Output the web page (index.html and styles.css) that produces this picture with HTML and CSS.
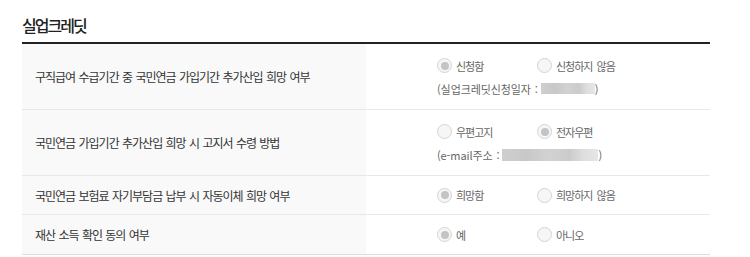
FILE: index.html
```html
<!DOCTYPE html>
<html lang="ko">
<head>
    <meta charset="UTF-8">
    <title>실업크레딧</title>
    <link rel="stylesheet" href="styles.css">
</head>
<body>
    <h2 class="section-title">실업크레딧</h2>

    <div class="info-table">
        <div class="row row-tall">
            <div class="label">구직급여 수급기간 중 국민연금 가입기간 추가산입 희망 여부</div>
            <div class="value">
                <div class="options">
                    <span class="option"><span class="radio checked"></span>신청함</span>
                    <span class="option"><span class="radio"></span>신청하지 않음</span>
                </div>
                <div class="note">(실업크레딧신청일자 : <span class="masked masked-date"></span>)</div>
            </div>
        </div>

        <div class="row row-tall">
            <div class="label">국민연금 가입기간 추가산입 희망 시 고지서 수령 방법</div>
            <div class="value">
                <div class="options">
                    <span class="option"><span class="radio"></span>우편고지</span>
                    <span class="option"><span class="radio checked"></span>전자우편</span>
                </div>
                <div class="note">(e-mail주소 : <span class="masked masked-mail"></span>)</div>
            </div>
        </div>

        <div class="row">
            <div class="label">국민연금 보험료 자기부담금 납부 시 자동이체 희망 여부</div>
            <div class="value">
                <div class="options">
                    <span class="option"><span class="radio checked"></span>희망함</span>
                    <span class="option"><span class="radio"></span>희망하지 않음</span>
                </div>
            </div>
        </div>

        <div class="row row-last">
            <div class="label">재산 소득 확인 동의 여부</div>
            <div class="value">
                <div class="options">
                    <span class="option"><span class="radio checked"></span>예</span>
                    <span class="option"><span class="radio"></span>아니오</span>
                </div>
            </div>
        </div>
    </div>
</body>
</html>
```

FILE: styles.css
```css
body {
    margin: 0;
    padding: 0 40px 0 22px;
    font-family: "Noto Sans CJK KR", "Noto Sans", sans-serif;
    color: #333;
    background: #fff;
}
.section-title {
    margin: 0;
    padding-top: 14px;
    height: 28px;
    font-size: 16px;
    font-weight: 500;
    letter-spacing: -2px;
    line-height: 22px;
    color: #222;
}
.info-table {
    width: 688px;
    border-top: 2px solid #222;
}
.row {
    display: grid;
    grid-template-columns: 344px 344px;
    height: 38px;
    border-bottom: 1px solid #e8e8e8;
}
.row-tall {
    height: 65px;
}
.row-last {
    height: 39px;
    border-bottom-color: #dcdcdc;
}
.label {
    display: flex;
    align-items: center;
    padding-left: 13px;
    background: #f9f9f9;
    font-size: 12px;
    letter-spacing: -1px;
    word-spacing: 1px;
    color: #333;
}
.value {
    display: flex;
    flex-direction: column;
    justify-content: center;
    padding-left: 71px;
    font-size: 11px;
    letter-spacing: -1px;
    word-spacing: 2px;
    color: #666;
}
.options {
    display: flex;
    height: 18px;
    align-items: center;
}
.option {
    display: flex;
    align-items: center;
    width: 100px;
}
.radio {
    box-sizing: border-box;
    width: 15px;
    height: 15px;
    margin-right: 4px;
    border: 1px solid #d4d4d4;
    border-radius: 50%;
    background: #f6f6f6;
    position: relative;
}
.radio.checked::after {
    content: "";
    position: absolute;
    top: 2.5px;
    left: 2.5px;
    width: 8px;
    height: 8px;
    border-radius: 50%;
    background: #c4c4c4;
}
.note {
    display: flex;
    align-items: center;
    margin-top: 6px;
    height: 16px;
    letter-spacing: -0.1px;
    word-spacing: 1px;
}
.masked {
    display: inline-block;
    height: 11px;
    background: linear-gradient(90deg, #cfcfcf 0, #c8c8c8 25%, #d2d2d2 50%, #cbcbcb 70%, #dedede 85%, #e6e6e6 100%);
}
.masked-date {
    width: 54px;
    margin-left: 3px;
}
.masked-mail {
    width: 96px;
    margin-left: 3px;
    height: 12px;
}
```
